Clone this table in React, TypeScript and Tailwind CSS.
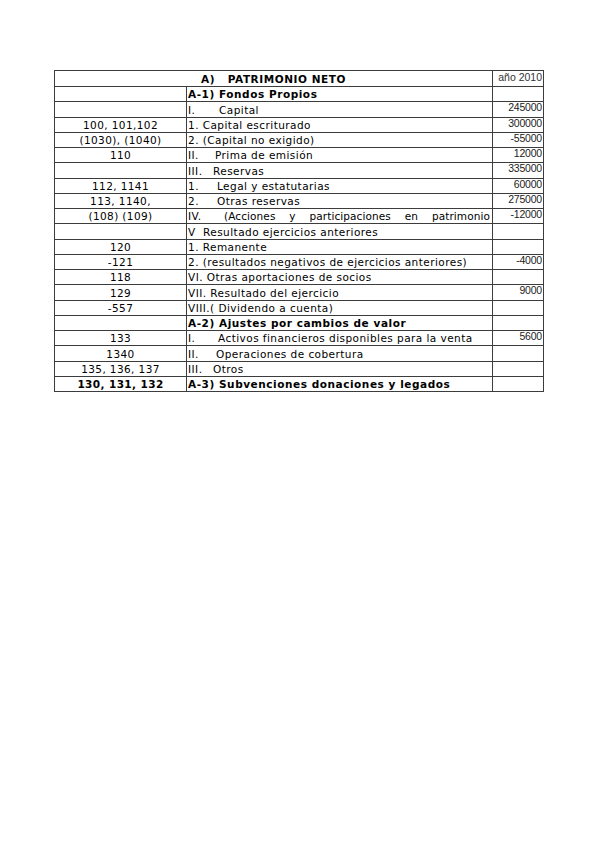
import React from "react";

type Row = {
  code?: string;
  codeBold?: boolean;
  prefix?: string;
  prefixW?: number;
  text: string;
  bold?: boolean;
  justify?: boolean;
  value?: string;
};

const rows: Row[] = [
  { text: "A-1) Fondos Propios", bold: true },
  { prefix: "I.", prefixW: 31, text: "Capital", value: "245000" },
  { code: "100, 101,102", text: "1. Capital escriturado", value: "300000" },
  { code: "(1030), (1040)", text: "2. (Capital no exigido)", value: "-55000" },
  { code: "110", prefix: "II.", prefixW: 27, text: "Prima de emisión", value: "12000" },
  { prefix: "III.", prefixW: 25, text: "Reservas", value: "335000" },
  { code: "112, 1141", prefix: "1.", prefixW: 29, text: "Legal y estatutarias", value: "60000" },
  { code: "113, 1140,", prefix: "2.", prefixW: 29, text: "Otras reservas", value: "275000" },
  { code: "(108) (109)", prefix: "IV.", prefixW: 36, text: "(Acciones  y  participaciones  en  patrimonio", justify: true, value: "-12000" },
  { prefix: "V", prefixW: 15, text: "Resultado ejercicios anteriores" },
  { code: "120", text: "1. Remanente" },
  { code: "-121", text: "2. (resultados negativos de ejercicios anteriores)", value: "-4000" },
  { code: "118", text: "VI. Otras aportaciones de socios" },
  { code: "129", text: "VII. Resultado del ejercicio", value: "9000" },
  { code: "-557", text: "VIII.( Dividendo a cuenta)" },
  { text: "A-2) Ajustes por cambios de valor", bold: true },
  { code: "133", prefix: "I.", prefixW: 30, text: "Activos financieros disponibles para la venta", value: "5600" },
  { code: "1340", prefix: "II.", prefixW: 28, text: "Operaciones de cobertura" },
  { code: "135, 136, 137", prefix: "III.", prefixW: 25, text: "Otros" },
  { code: "130, 131, 132", codeBold: true, text: "A-3) Subvenciones donaciones y legados", bold: true },
];

const dv = "font-['DejaVu_Sans',sans-serif]";
const lib = "font-['Liberation_Sans',Arial,sans-serif]";

export default function App() {
  return (
    <div className="w-[599px] h-[848px] bg-white text-black">
      <div className="pt-[70px] pl-[54px]">
        <div className="w-[490px] border-l border-t border-[#3c3c3c]">
          <div className="flex h-[16px]">
            <div className={`w-[438px] border-r border-b border-[#3c3c3c] flex items-center justify-center pt-[1px] text-[10.5px] font-bold ${dv} tracking-[0.55px] leading-none`}>
              <span className="whitespace-pre">A)   PATRIMONIO NETO</span>
            </div>
            <div className={`w-[51px] border-r border-b border-[#3c3c3c] flex items-start justify-end pr-[1px] pt-[1px] text-[10.5px] ${lib} leading-none text-[#333]`}>
              año 2010
            </div>
          </div>
          {rows.map((r, i) => (
            <div key={i} className="flex h-[15.25px]">
              <div
                className={`w-[132px] border-r border-b border-[#3c3c3c] flex items-center justify-center pt-[1px] text-[10.5px] ${dv} leading-none ${r.codeBold ? "font-bold tracking-[0.4px]" : "tracking-[0.4px]"}`}
              >
                {r.code}
              </div>
              <div
                className={`w-[306px] border-r border-b border-[#3c3c3c] flex items-center pl-[1px] pt-[1px] text-[10.5px] ${dv} leading-none whitespace-pre overflow-hidden ${r.bold ? "font-bold tracking-[0.55px]" : "tracking-[0.45px]"}`}
              >
                {r.prefix && (
                  <span className="inline-block shrink-0" style={{ width: r.prefixW }}>
                    {r.prefix}
                  </span>
                )}
                {r.justify ? (
                  <span className="flex-1 flex justify-between pr-[2px] tracking-[0.1px]">
                    {r.text.split(/\s+/).map((w, k) => (
                      <span key={k}>{w}</span>
                    ))}
                  </span>
                ) : (
                  <span>{r.text}</span>
                )}
              </div>
              <div
                className={`w-[51px] border-r border-b border-[#3c3c3c] flex items-start justify-end pr-[1px] text-[10.5px] ${lib} leading-none tracking-[-0.2px] text-[#222]`}
              >
                {r.value}
              </div>
            </div>
          ))}
        </div>
      </div>
    </div>
  );
}
